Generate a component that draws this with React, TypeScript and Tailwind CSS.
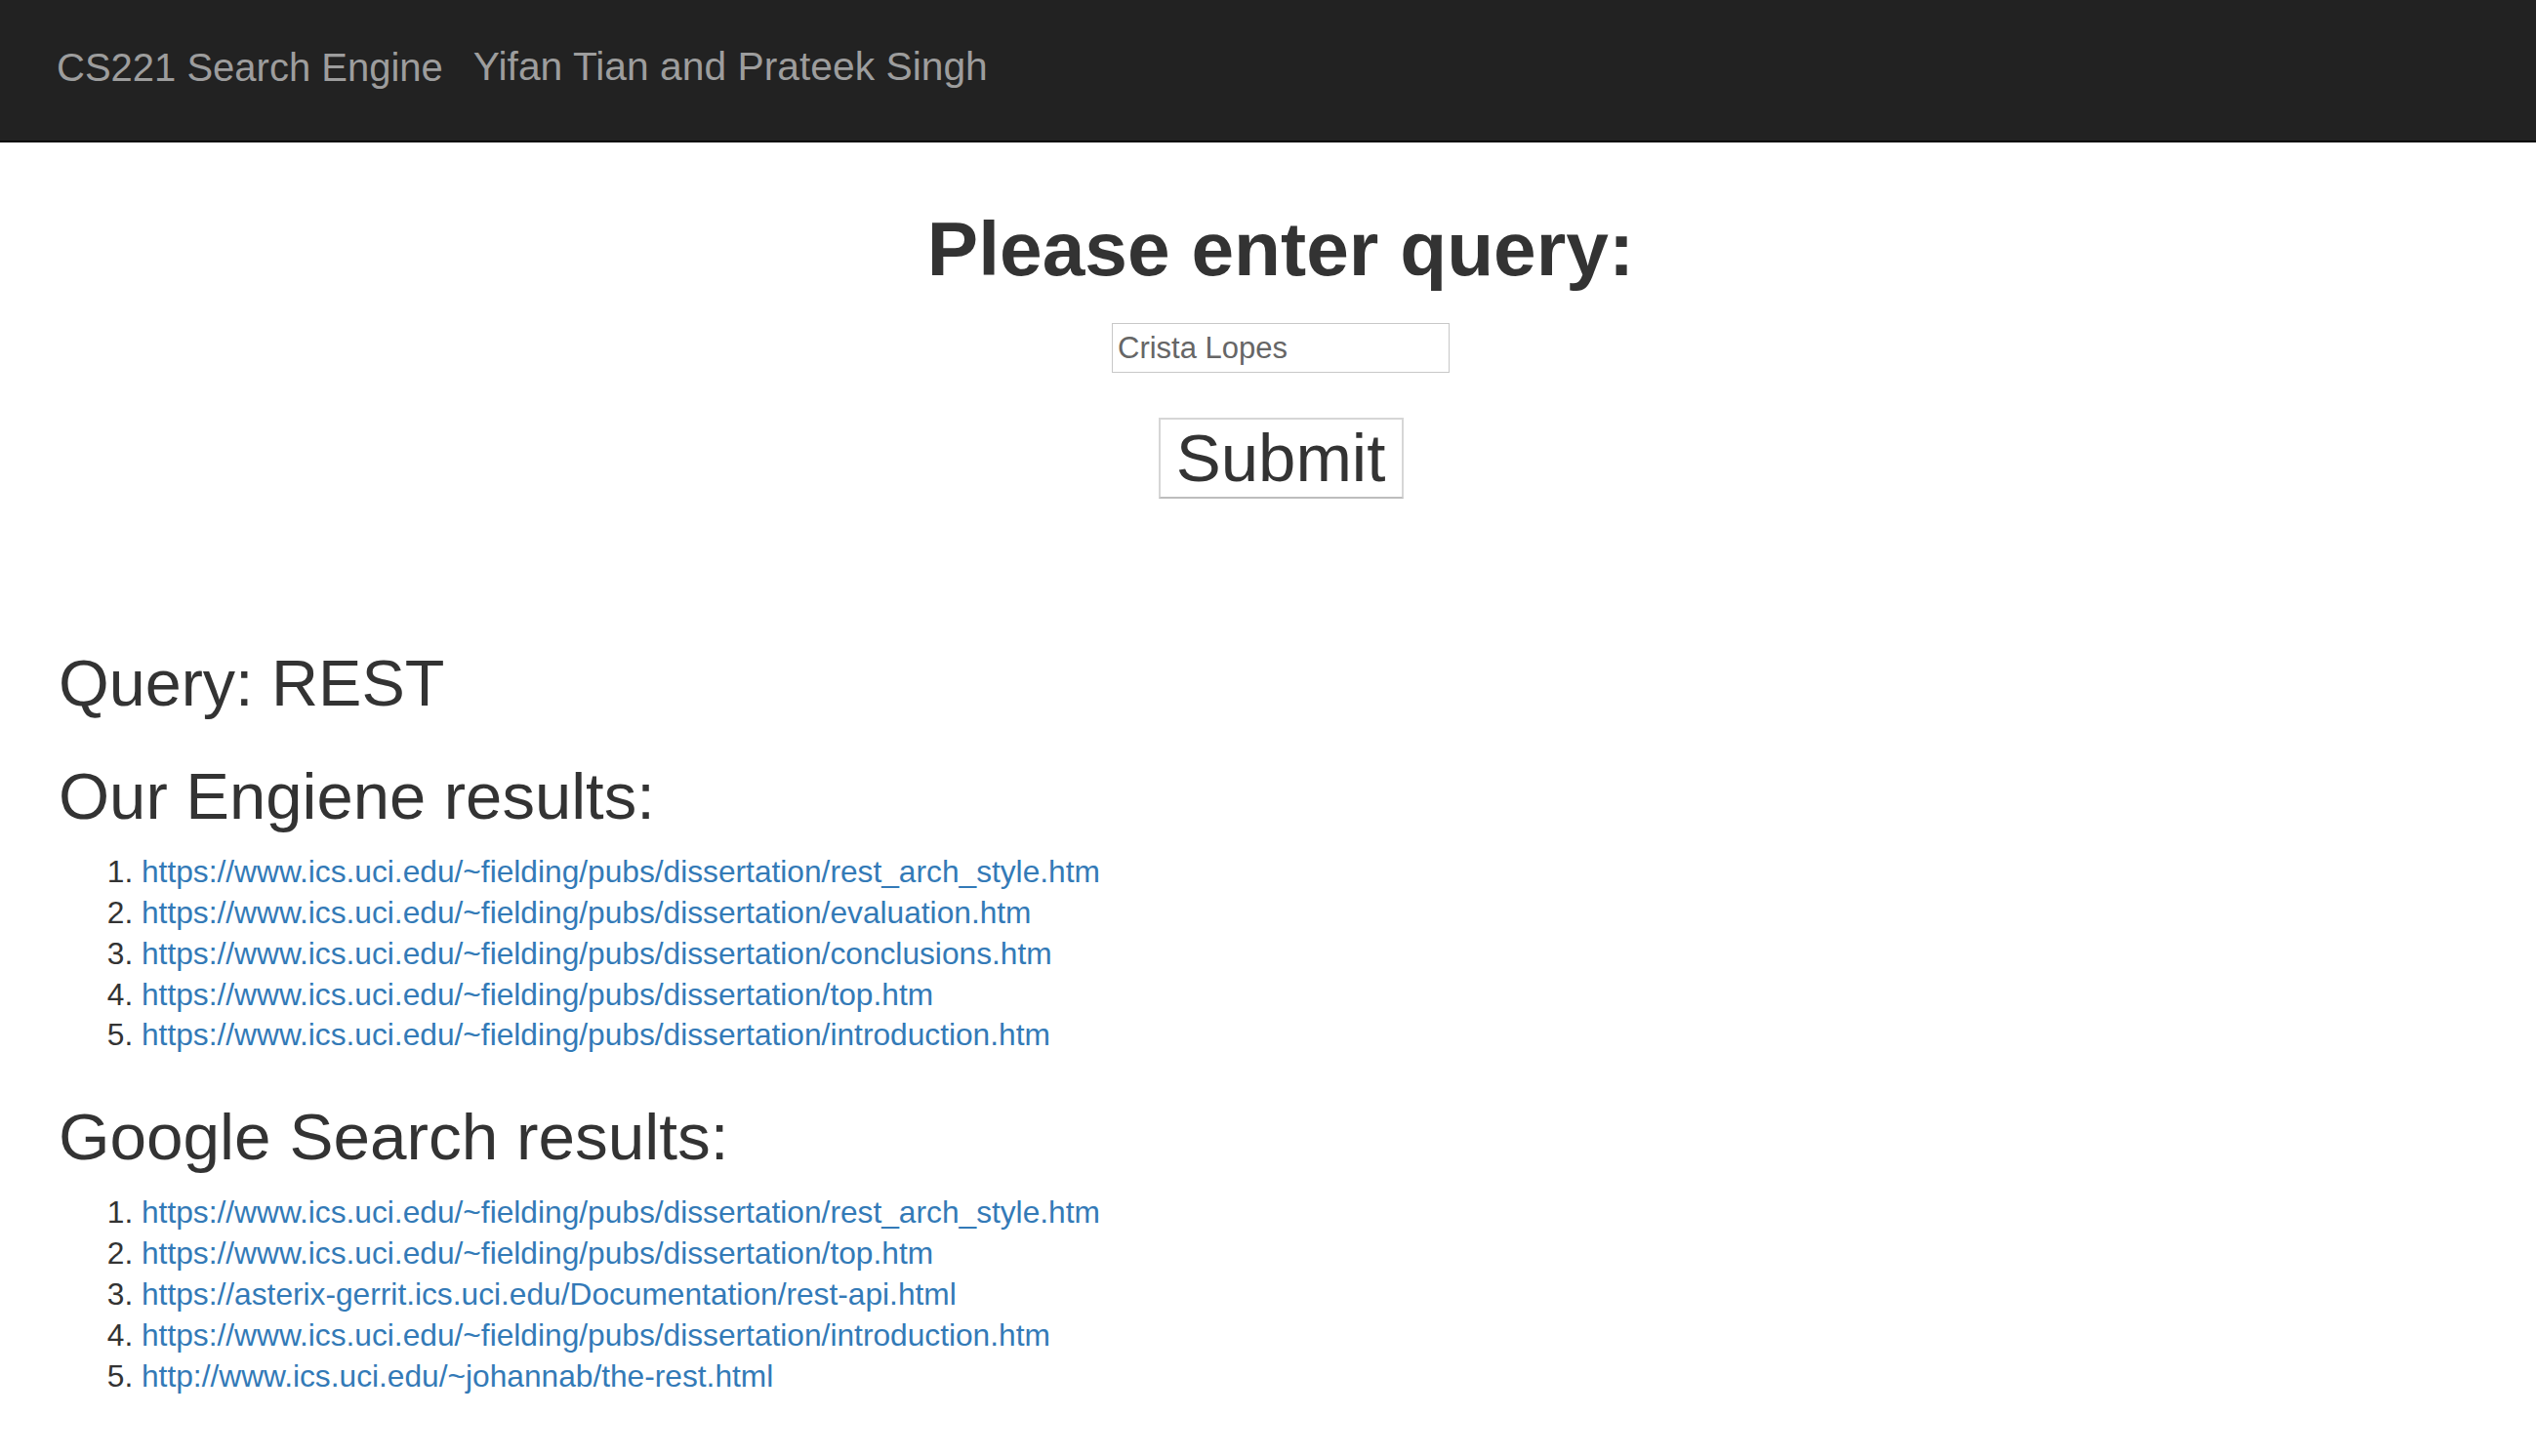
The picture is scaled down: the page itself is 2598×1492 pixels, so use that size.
import { useState } from "react";

const ourResults = [
  "https://www.ics.uci.edu/~fielding/pubs/dissertation/rest_arch_style.htm",
  "https://www.ics.uci.edu/~fielding/pubs/dissertation/evaluation.htm",
  "https://www.ics.uci.edu/~fielding/pubs/dissertation/conclusions.htm",
  "https://www.ics.uci.edu/~fielding/pubs/dissertation/top.htm",
  "https://www.ics.uci.edu/~fielding/pubs/dissertation/introduction.htm",
];

const googleResults = [
  "https://www.ics.uci.edu/~fielding/pubs/dissertation/rest_arch_style.htm",
  "https://www.ics.uci.edu/~fielding/pubs/dissertation/top.htm",
  "https://asterix-gerrit.ics.uci.edu/Documentation/rest-api.html",
  "https://www.ics.uci.edu/~fielding/pubs/dissertation/introduction.htm",
  "http://www.ics.uci.edu/~johannab/the-rest.html",
];

function ResultList({ links }: { links: string[] }) {
  return (
    <ol className="list-decimal pl-[85px] mt-[20px] text-[31.7px] leading-[41.8px] text-[#333]">
      {links.map((url, i) => (
        <li key={i}>
          <a href={url} className="text-[#337ab7] no-underline">
            {url}
          </a>
        </li>
      ))}
    </ol>
  );
}

export default function App() {
  const [query, setQuery] = useState("Crista Lopes");

  return (
    <div className="min-h-screen bg-white font-['Liberation_Sans',Arial,sans-serif] text-[#333]">
      {/* Top navbar */}
      <nav className="h-[146px] bg-[#222] border-b-2 border-[#080808] flex items-center px-[58px] pb-[6px] text-[40px] text-[#9d9d9d]">
        <span>CS221 Search Engine</span>
        <span className="ml-[31px] text-[40.8px]">Yifan Tian and Prateek Singh</span>
      </nav>

      <main className="px-[60px]">
        {/* Search form */}
        <div className="ml-[26px] flex flex-col items-center">
          <h1 className="mt-[66px] text-[78.5px] font-bold leading-[1.1]">
            Please enter query:
          </h1>
          <input
            type="text"
            value={query}
            onChange={(e) => setQuery(e.target.value)}
            className="mt-[33px] w-[346px] h-[51px] px-[5px] border border-[#c8c8c8] text-[31px] text-[#666] outline-none"
          />
          <button className="mt-[46px] w-[251px] h-[83px] border-2 border-[#d6d6d6] border-b-[#bdbdbd] bg-white text-[69px] leading-[79px] text-[#333]">
            Submit
          </button>
        </div>

        {/* Results */}
        <h2 className="mt-[153px] text-[66.5px] font-normal leading-[1.1]">
          Query: REST
        </h2>

        <h2 className="mt-[42px] text-[67px] font-normal leading-[1.1]">
          Our Engiene results:
        </h2>
        <ResultList links={ourResults} />

        <h2 className="mt-[46px] text-[67.5px] font-normal leading-[1.1]">
          Google Search results:
        </h2>
        <ResultList links={googleResults} />
      </main>
    </div>
  );
}
